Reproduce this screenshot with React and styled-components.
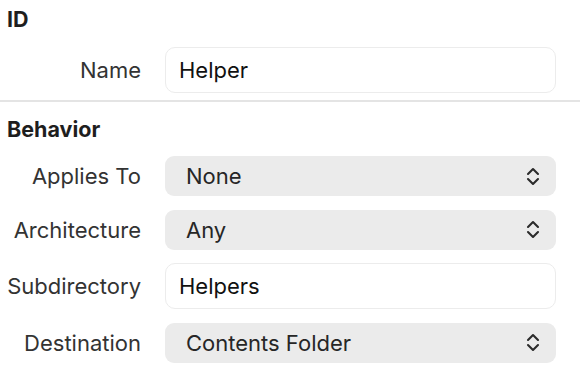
import React from "react";
import styled, { createGlobalStyle } from "styled-components";

const GlobalStyle = createGlobalStyle`
  html, body {
    margin: 0;
    padding: 0;
    background: #ffffff;
  }
  body {
    font-family: "Inter", "Noto Sans", "Liberation Sans", sans-serif;
    -webkit-font-smoothing: antialiased;
  }
`;

const Panel = styled.div`
  width: 580px;
  height: 382px;
  background: #ffffff;
  overflow: hidden;
`;

const Section = styled.section`
  padding: ${(p) => p.$top}px 24px ${(p) => p.$bottom}px 7px;
`;

const Heading = styled.h2`
  margin: 0;
  font-size: 21.5px;
  line-height: 22px;
  font-weight: 700;
  color: #1e1e1e;
`;

const Divider = styled.hr`
  margin: 0;
  border: none;
  height: 2px;
  background: #e4e4e4;
`;

const Form = styled.div`
  display: grid;
  grid-template-columns: 134px 1fr;
  column-gap: 24px;
  row-gap: 13.5px;
  align-items: center;
  margin-top: ${(p) => p.$gap}px;
`;

const Label = styled.label`
  text-align: right;
  font-size: 22px;
  line-height: 26px;
  color: #333333;
  white-space: nowrap;
`;

const TextField = styled.div`
  box-sizing: border-box;
  height: 46px;
  display: flex;
  align-items: center;
  padding: 0 13px;
  border: 1px solid #ececec;
  border-radius: 10px;
  background: #ffffff;
  font-size: 22px;
  color: #111111;
`;

const SelectBox = styled.div`
  box-sizing: border-box;
  height: 40px;
  display: flex;
  align-items: center;
  justify-content: space-between;
  padding: 0 16px 0 21px;
  border-radius: 9px;
  background: #ebebeb;
  font-size: 22px;
  color: #262626;
`;

const Chevrons = () => (
  <svg width="14" height="19" viewBox="0 0 14 19" fill="none">
    <path
      d="M2 7 L7 2 L12 7 M2 12 L7 17 L12 12"
      stroke="#2b2b2b"
      strokeWidth="2.1"
      strokeLinecap="round"
      strokeLinejoin="round"
    />
  </svg>
);

const behaviorRows = [
  { label: "Applies To", kind: "select", value: "None" },
  { label: "Architecture", kind: "select", value: "Any" },
  { label: "Subdirectory", kind: "text", value: "Helpers" },
  { label: "Destination", kind: "select", value: "Contents Folder" },
];

function Field({ kind, value }) {
  if (kind === "text") return <TextField>{value}</TextField>;
  return (
    <SelectBox>
      <span>{value}</span>
      <Chevrons />
    </SelectBox>
  );
}

export default function App() {
  return (
    <Panel>
      <GlobalStyle />
      <Section $top={8} $bottom={7}>
        <Heading>ID</Heading>
        <Form $gap={17}>
          <Label>Name</Label>
          <Field kind="text" value="Helper" />
        </Form>
      </Section>
      <Divider />
      <Section $top={16} $bottom={0}>
        <Heading>Behavior</Heading>
        <Form $gap={16}>
          {behaviorRows.map((row) => (
            <React.Fragment key={row.label}>
              <Label>{row.label}</Label>
              <Field kind={row.kind} value={row.value} />
            </React.Fragment>
          ))}
        </Form>
      </Section>
    </Panel>
  );
}
